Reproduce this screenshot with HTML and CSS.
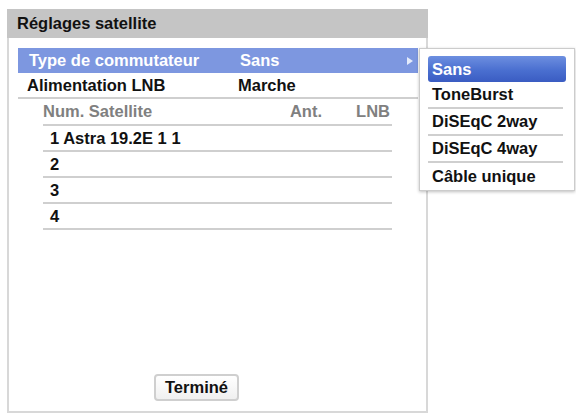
FILE: index.html
```html
<!DOCTYPE html>
<html>
<head>
    <title>Réglages satellite</title>
    <link rel="stylesheet" href="styles.css">
</head>
<body>
    <div class="screen">
        <div class="panel">
            <div class="panel-title">Réglages satellite</div>
            <div class="panel-body">
                <div class="setting selected">
                    <span class="label">Type de commutateur</span>
                    <span class="value">Sans</span>
                    <svg class="arrow" width="6" height="8" viewBox="0 0 6 8"><path d="M0 0 L6 4 L0 8 Z" fill="#e4ebfb"/></svg>
                </div>
                <div class="setting last">
                    <span class="label">Alimentation LNB</span>
                    <span class="value">Marche</span>
                </div>

                <div class="sat-table">
                    <div class="sat-row head">
                        <span>Num. Satellite</span>
                        <span class="num">Ant.</span>
                        <span class="num">LNB</span>
                    </div>
                    <div class="sat-row">
                        <span>1 Astra 19.2E 1 1</span><span></span><span></span>
                    </div>
                    <div class="sat-row">
                        <span>2</span><span></span><span></span>
                    </div>
                    <div class="sat-row">
                        <span>3</span><span></span><span></span>
                    </div>
                    <div class="sat-row">
                        <span>4</span><span></span><span></span>
                    </div>
                </div>

                <div class="footer">
                    <button class="btn">Terminé</button>
                </div>
            </div>
        </div>

        <ul class="dropdown">
            <li class="active">Sans</li>
            <li class="sep">ToneBurst</li>
            <li class="sep">DiSEqC 2way</li>
            <li class="sep">DiSEqC 4way</li>
            <li>Câble unique</li>
        </ul>
    </div>
</body>
</html>
```
FILE: styles.css
```css
body {
    margin: 0;
    background-color: #fff;
    font-family: "Liberation Sans", Arial, sans-serif;
    font-weight: bold;
    font-size: 16.5px;
    color: #111;
}
.screen {
    position: relative;
    width: 576px;
    height: 415px;
}
.panel {
    margin: 9px 0 0 7px;
    width: 421px;
    height: 404px;
    display: flex;
    flex-direction: column;
}
.panel-title {
    height: 29px;
    line-height: 29px;
    padding-left: 10px;
    background-color: #c5c5c5;
    color: #111;
}
.panel-body {
    flex: 1;
    display: flex;
    flex-direction: column;
    padding: 10px 8px 0 9px;
    border: 2px solid #d8d8d8;
    border-top: none;
}
.setting {
    display: grid;
    grid-template-columns: 211px 1fr 11px;
    align-items: center;
    height: 25px;
    padding-left: 10px;
}
.setting.selected {
    background-color: #7d97e0;
    color: #fff;
    padding-left: 11px;
}
.setting.last {
    height: 24px;
    border-bottom: 2px solid #cfcfcf;
    padding-left: 9px;
}
.arrow {
    justify-self: start;
}
.sat-table {
    margin: 0 26px 0 25px;
}
.sat-row {
    display: grid;
    grid-template-columns: 1fr 60px 68px;
    align-items: center;
    height: 24px;
    padding-left: 7px;
    border-bottom: 2px solid #cfcfcf;
}
.sat-row.head {
    height: 25px;
    padding-left: 0;
    color: #808080;
}
.sat-row .num {
    text-align: right;
    padding-right: 2px;
}
.footer {
    margin-top: auto;
    padding: 0 0 10px 136px;
}
.btn {
    width: 85px;
    height: 27px;
    font-family: inherit;
    font-weight: bold;
    font-size: 16.5px;
    color: #111;
    background: linear-gradient(#ffffff, #f0f0f0);
    border: 2px solid #cfcfcf;
    border-radius: 4px;
    padding: 0;
}
.dropdown {
    position: absolute;
    left: 419px;
    top: 39px;
    width: 156px;
    height: 143px;
    box-sizing: border-box;
    margin: 0;
    padding: 7px 8px 0 8px;
    list-style: none;
    background-color: #fff;
    border: 1px solid #cccccc;
    box-shadow: 0 1px 3px rgba(0,0,0,0.25);
}
.dropdown li {
    height: 26px;
    line-height: 26px;
    padding-left: 4px;
}
.dropdown li.sep {
    height: 25px;
    border-bottom: 2px solid #cfcfcf;
    margin-right: 3px;
    line-height: 25px;
}
.dropdown li.active {
    color: #fff;
    background: linear-gradient(#6d8fe0, #4a6fd0 55%, #3a5cc2);
    border-radius: 3px;
}
```
